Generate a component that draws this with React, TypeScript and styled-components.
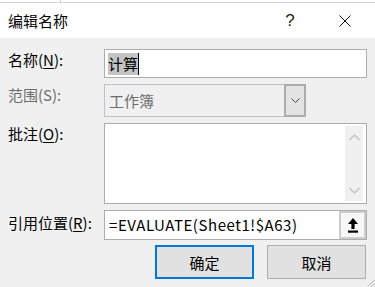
import styled, { createGlobalStyle } from "styled-components";

const GlobalStyle = createGlobalStyle`
  html, body {
    margin: 0;
    padding: 0;
    background: #f0f0f0;
  }
  body {
    font-family: "Noto Sans CJK SC", "Noto Sans", sans-serif;
    color: #000;
  }
`;

export default function App() {
  return (
    <>
      <GlobalStyle />
      <Dialog>
        <SheetEdge />
        <TitleBar>
          <Title>编辑名称</Title>
          <Help>?</Help>
          <Close>
            <svg width="12" height="12" viewBox="0 0 12 12">
              <path d="M0.5 0.5 L11.5 11.5 M11.5 0.5 L0.5 11.5" stroke="#111" strokeWidth="1" />
            </svg>
          </Close>
        </TitleBar>
        <Body>
          <Label $top={0}>
            名称(<U>N</U>):
          </Label>
          <Field $h={29}>
            <Selected>计算</Selected>
            <Caret />
          </Field>

          <Label $top={0} $disabled>
            范围(S):
          </Label>
          <ScopeRow>
            <ScopeBox>工作簿</ScopeBox>
            <DropButton>
              <svg width="9" height="6" viewBox="0 0 9 6">
                <path d="M0.5 0.5 L4.5 4.5 L8.5 0.5" stroke="#444" strokeWidth="1" fill="none" />
              </svg>
            </DropButton>
          </ScopeRow>

          <Label $top={0}>
            批注(<U>O</U>):
          </Label>
          <Comment>
            <ScrollBar>
              <svg width="11" height="7" viewBox="0 0 11 7">
                <path d="M0.5 6 L5.5 1 L10.5 6" stroke="#c2c2c2" strokeWidth="1.4" fill="none" />
              </svg>
              <svg width="11" height="7" viewBox="0 0 11 7">
                <path d="M0.5 1 L5.5 6 L10.5 1" stroke="#c2c2c2" strokeWidth="1.4" fill="none" />
              </svg>
            </ScrollBar>
          </Comment>

          <Label $top={2}>
            引用位置(<U>R</U>):
          </Label>
          <RefBox>
            <RefText>=EVALUATE(Sheet1!$A63)</RefText>
            <PickButton>
              <svg width="10" height="15" viewBox="0 0 10 15">
                <path d="M5 0 L10 6 L6.6 6 L6.6 11 L3.4 11 L3.4 6 L0 6 Z" fill="#000" />
                <rect x="0" y="12.5" width="10" height="2.2" fill="#000" />
              </svg>
            </PickButton>
          </RefBox>
        </Body>
        <Buttons>
          <Button $primary>确定</Button>
          <Button>取消</Button>
        </Buttons>
        <Grip>
          <svg width="9" height="8" viewBox="0 0 9 8">
            <path d="M8.5 1 L2 7.5 M8.5 4.5 L5 8" stroke="#b5b5b5" strokeWidth="1" />
          </svg>
        </Grip>
      </Dialog>
    </>
  );
}

const Dialog = styled.div`
  position: relative;
  width: 375px;
  height: 287px;
  background: #f0f0f0;
  overflow: hidden;
`;

const SheetEdge = styled.div`
  height: 2px;
  background: #fff;
  border-bottom: 1px solid #d4d4d4;
  background-image: linear-gradient(to right, transparent 60px, #c6c6c6 60px, #c6c6c6 61px, transparent 61px);
`;

const TitleBar = styled.div`
  height: 35px;
  background: #fff;
  display: flex;
  align-items: center;
  padding-left: 8px;
`;

const Title = styled.div`
  font-size: 15px;
  line-height: 20px;
  flex: 1;
`;

const Help = styled.div`
  font-family: "Liberation Sans", sans-serif;
  font-size: 17px;
  color: #222;
  width: 18px;
  margin-right: 40px;
  text-align: center;
`;

const Close = styled.div`
  width: 12px;
  height: 12px;
  margin-right: 24px;
  display: flex;
`;

const Body = styled.div`
  display: grid;
  grid-template-columns: 96px 263px;
  row-gap: 6px;
  padding: 11px 0 0 8px;
`;

const Label = styled.div<{ $top: number; $disabled?: boolean }>`
  font-size: 15px;
  line-height: 22px;
  padding-top: ${({ $top }) => $top}px;
  color: ${({ $disabled }) => ($disabled ? "#6d6d6d" : "#000")};
  white-space: nowrap;
`;

const U = styled.span`
  text-decoration: underline;
  text-underline-offset: 2px;
`;

const Field = styled.div<{ $h: number }>`
  box-sizing: border-box;
  height: ${({ $h }) => $h}px;
  background: #fff;
  border: 1px solid #acacac;
  display: flex;
  align-items: center;
  padding-left: 3px;
`;

const Selected = styled.span`
  font-size: 15px;
  line-height: 22px;
  background: #c4c4c4;
  color: #000;
`;

const Caret = styled.span`
  width: 1px;
  height: 22px;
  background: #000;
`;

const ScopeRow = styled.div`
  display: flex;
  width: 202px;
  height: 33px;
`;

const ScopeBox = styled.div`
  flex: 1;
  box-sizing: border-box;
  border: 1px solid #c2c2c2;
  border-right: none;
  background: #f0f0f0;
  color: #6d6d6d;
  font-size: 15px;
  line-height: 31px;
  padding-left: 4px;
`;

const DropButton = styled.div`
  box-sizing: border-box;
  width: 22px;
  border: 2px solid #acacac;
  background: #e3e3e3;
  display: flex;
  align-items: center;
  justify-content: center;
`;

const Comment = styled.div`
  box-sizing: border-box;
  height: 81px;
  background: #fff;
  border: 1px solid #acacac;
  display: flex;
  justify-content: flex-end;
  padding: 2px 3px 2px 0;
`;

const ScrollBar = styled.div`
  width: 18px;
  background: #f0f0f0;
  display: flex;
  flex-direction: column;
  align-items: center;
  justify-content: space-between;
  padding: 8px 0 7px;
  box-sizing: border-box;
`;

const RefBox = styled.div`
  box-sizing: border-box;
  height: 30px;
  background: #fff;
  border: 1px solid #acacac;
  display: flex;
  align-items: stretch;
`;

const RefText = styled.div`
  flex: 1;
  font-size: 15px;
  line-height: 28px;
  padding-left: 4px;
  letter-spacing: 0.55px;
`;

const PickButton = styled.div`
  box-sizing: border-box;
  width: 27px;
  border: 2px solid #cccccc;
  background: #f7f7f7;
  display: flex;
  align-items: center;
  justify-content: center;
`;

const Buttons = styled.div`
  display: flex;
  justify-content: flex-end;
  gap: 13px;
  padding: 5px 9px 0 0;
`;

const Button = styled.div<{ $primary?: boolean }>`
  box-sizing: border-box;
  width: 99px;
  height: 34px;
  background: #e1e1e1;
  border: ${({ $primary }) => ($primary ? "2px solid #0078d7" : "1px solid #adadad")};
  font-size: 15px;
  display: flex;
  align-items: center;
  justify-content: center;
`;

const Grip = styled.div`
  position: absolute;
  right: 0;
  bottom: 0;
  display: flex;
`;
